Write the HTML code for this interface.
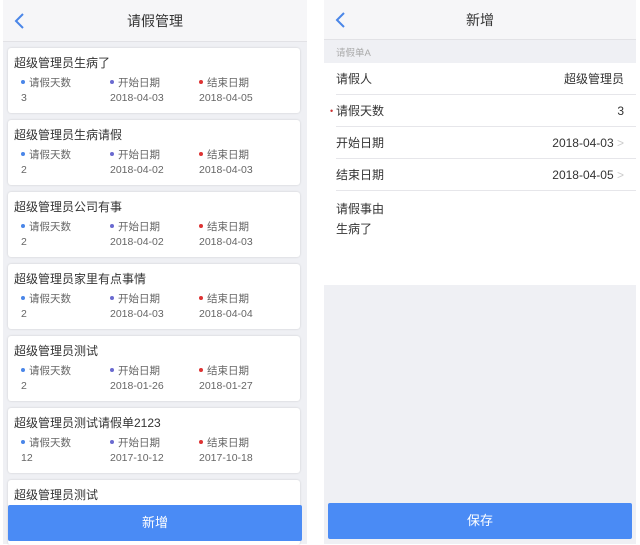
<!DOCTYPE html>
<html><head><meta charset="utf-8"><style>
*{margin:0;padding:0;box-sizing:border-box}
body{width:640px;height:544px;background:#fff;font-family:"Liberation Sans","Noto Sans CJK SC",sans-serif;position:relative;overflow:hidden;color:#333}
.p{position:absolute;top:0;bottom:0;background:#eff0f4}
.hd{position:absolute;left:0;right:0;top:0;background:#f6f6f8;border-bottom:1px solid #e2e2e6;text-align:center;font-size:14px;color:#333}
.back{position:absolute;left:10px;top:12px;width:14px;height:18px}
.card{position:absolute;left:5px;width:292px;height:65px;background:#fff;border-radius:3px;box-shadow:0 0 2px rgba(0,0,0,.15)}
.t{position:absolute;left:6px;top:6px;font-size:12px;color:#333}
.l,.v{position:absolute;font-size:10.5px;color:#666}
.l{top:27px}.v{top:44px}
.d{display:inline-block;width:4px;height:4px;border-radius:50%;margin-right:4px;vertical-align:middle;position:relative;top:-1px}
.btn{position:absolute;background:#4a8bf5;color:#fff;text-align:center;font-size:13px;border-radius:2px}
.row{position:absolute;left:0;right:0;height:32px;background:#fff;font-size:12px;line-height:32px}
.row .a{position:absolute;left:12px}
.row .b{position:absolute;right:12px}
.row .line{position:absolute;left:12px;right:0;bottom:0;height:1px;background:#e6e6ea}
</style></head><body>
<div class="p" style="left:3px;width:304px">
 <div class="hd" style="height:42px;line-height:42px">请假管理
  <svg class="back" viewBox="0 0 14 18"><path d="M10 2 L3 9 L10 16" fill="none" stroke="#4a86e8" stroke-width="2"/></svg></div>
 <div id="cards"></div>
 <div class="btn" style="left:5px;width:294px;top:505px;height:36px;line-height:36px">新增</div>
</div>
<div class="p" style="left:324px;width:312px">
 <div class="hd" style="height:40px;line-height:40px">新增
  <svg class="back" viewBox="0 0 14 18" style="top:11px"><path d="M10 2 L3 9 L10 16" fill="none" stroke="#4a86e8" stroke-width="2"/></svg></div>
 <div style="position:absolute;left:12px;top:45px;font-size:9.5px;color:#aaa">请假单A</div>
 <div class="row" style="top:63px"><span class="a">请假人</span><span class="b">超级管理员</span><div class="line"></div></div>
 <div class="row" style="top:95px"><span style="position:absolute;left:6px;color:#c33;font-size:9px">•</span><span class="a">请假天数</span><span class="b">3</span><div class="line"></div></div>
 <div class="row" style="top:127px"><span class="a">开始日期</span><span class="b">2018-04-03 <span style="color:#ccc">&gt;</span></span><div class="line"></div></div>
 <div class="row" style="top:159px"><span class="a">结束日期</span><span class="b">2018-04-05 <span style="color:#ccc">&gt;</span></span><div class="line"></div></div>
 <div class="row" style="top:191px;height:94px;line-height:20px"><div style="position:absolute;left:12px;top:8px">请假事由<br>生病了</div></div>
 <div class="btn" style="left:4px;width:304px;top:503px;height:36px;line-height:36px">保存</div>
</div>
<script>
var data=[["超级管理员生病了","3","2018-04-03","2018-04-05"],["超级管理员生病请假","2","2018-04-02","2018-04-03"],["超级管理员公司有事","2","2018-04-02","2018-04-03"],["超级管理员家里有点事情","2","2018-04-03","2018-04-04"],["超级管理员测试","2","2018-01-26","2018-01-27"],["超级管理员测试请假单2123","12","2017-10-12","2017-10-18"],["超级管理员测试","","",""]];
var h="";data.forEach(function(d,i){h+='<div class="card" style="top:'+(48+72*i)+'px"><div class="t">'+d[0]+'</div>';
if(d[1])h+='<div class="l" style="left:13px"><span class="d" style="background:#4a86e8"></span>请假天数</div><div class="l" style="left:102px"><span class="d" style="background:#6a6ad0"></span>开始日期</div><div class="l" style="left:191px"><span class="d" style="background:#d33"></span>结束日期</div><div class="v" style="left:13px">'+d[1]+'</div><div class="v" style="left:102px">'+d[2]+'</div><div class="v" style="left:191px">'+d[3]+'</div>';
h+='</div>';});document.getElementById("cards").innerHTML=h;
</script>
</body></html>
